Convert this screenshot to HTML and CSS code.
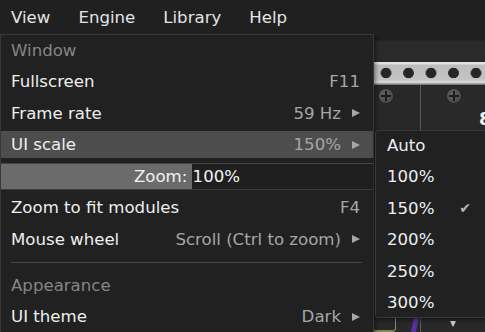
FILE: index.html
```html
<!DOCTYPE html>
<html>
<head>
<meta charset="utf-8">
<link rel="stylesheet" href="styles.css">
</head>
<body>
<div class="app">
  <div class="menubar">
    <span class="mb-item">View</span>
    <span class="mb-item">Engine</span>
    <span class="mb-item">Library</span>
    <span class="mb-item">Help</span>
  </div>
  <div class="workspace">
    <div class="rack">
      <div class="rack-top"></div>
      <div class="rail"></div>
      <div class="panels">
        <div class="panel panel-a">
          <div class="screw"></div>
          <div class="jack-row">
            <div class="port-box"></div>
            <div class="cable"></div>
          </div>
        </div>
        <div class="panel panel-b">
          <div class="screw"></div>
          <div class="label">8</div>
          <div class="arrow-down"></div>
        </div>
      </div>
    </div>

    <div class="menu main-menu">
      <div class="item header">Window</div>
      <div class="item"><span>Fullscreen</span><span class="right">F11</span></div>
      <div class="item"><span>Frame rate</span><span class="right">59 Hz<i class="tri"></i></span></div>
      <div class="item active"><span>UI scale</span><span class="right">150%<i class="tri"></i></span></div>
      <div class="slider" style="--fill: 191px"><span class="slider-text">Zoom: 100%</span></div>
      <div class="item"><span>Zoom to fit modules</span><span class="right">F4</span></div>
      <div class="item"><span>Mouse wheel</span><span class="right">Scroll (Ctrl to zoom)<i class="tri"></i></span></div>
      <div class="separator"><div class="sep-line"></div></div>
      <div class="item header">Appearance</div>
      <div class="item"><span>UI theme</span><span class="right">Dark<i class="tri"></i></span></div>
    </div>

    <div class="menu sub-menu">
      <div class="item">Auto</div>
      <div class="item">100%</div>
      <div class="item"><span>150%</span><span class="check">✔</span></div>
      <div class="item">200%</div>
      <div class="item">250%</div>
      <div class="item">300%</div>
    </div>
  </div>
</div>
</body>
</html>
```

FILE: styles.css
```css
* { box-sizing: border-box; }
html, body {
  margin: 0;
  padding: 0;
  width: 485px;
  height: 332px;
  overflow: hidden;
  background: #1c1c1c;
  font-family: "DejaVu Sans", "Liberation Sans", sans-serif;
  font-size: 16.6px;
}
.app {
  display: flex;
  flex-direction: column;
  width: 485px;
  height: 332px;
}
.menubar {
  height: 34px;
  flex: none;
  background: #202020;
  display: flex;
  align-items: center;
  gap: 28px;
  padding: 1px 0 0 11px;
  color: #e4e4e4;
}
.workspace {
  position: relative;
  flex: 1;
  overflow: hidden;
}
.rack {
  display: flex;
  flex-direction: column;
  height: 100%;
}
.rack-top {
  height: 28px;
  flex: none;
  background: linear-gradient(#1f1f1f 0, #1f1f1f 6px, #2a2a2a 7px, #2a2a2a 100%);
}
.rail {
  height: 23px;
  flex: none;
  background:
    radial-gradient(circle at 11.25px 11px, #262626 0, #262626 5px, transparent 5.6px) 14.75px 0 / 22.5px 23px repeat-x,
    linear-gradient(#e2e2e2 0, #e2e2e2 2px, #bdbdbd 3px, #c4c4c4 18px, #d4d4d4 19px, #d4d4d4 21px, #7a7a7a 22px);
}
.panels {
  flex: 1;
  display: flex;
}
.panel {
  display: flex;
  flex-direction: column;
  background: #282828;
}
.panel-a {
  width: 421px;
  flex: none;
  align-items: flex-end;
  border-right: 1px solid #5a5a5a;
  padding: 4px 27px 0 0;
}
.panel-b {
  flex: 1;
  min-width: 0;
  overflow: hidden;
  padding: 4px 0 0 26px;
  background: #292929;
}
.screw {
  width: 14px;
  height: 14px;
  border-radius: 50%;
  background: radial-gradient(circle at 40% 40%, #626262, #4a4a4a 70%);
  position: relative;
  flex: none;
}
.screw::before, .screw::after {
  content: "";
  position: absolute;
  background: #1b1b1b;
}
.screw::before { left: 2px; right: 2px; top: 6px; height: 2px; }
.screw::after { top: 2px; bottom: 2px; left: 6px; width: 2px; }
.label {
  margin: 6px 0 0 32px;
  color: #f0f0f0;
  font-weight: bold;
  font-size: 18px;
  line-height: 20px;
  white-space: nowrap;
}
.arrow-down {
  margin: auto 0 5px 3px;
  width: 0;
  height: 0;
  border-left: 3.5px solid transparent;
  border-right: 3.5px solid transparent;
  border-top: 6px solid #d0d0d0;
}
.jack-row {
  margin-top: auto;
  margin-right: -26px;
  display: flex;
  align-items: flex-end;
  gap: 17px;
  height: 20px;
}
.port-box {
  width: 25px;
  height: 19px;
  border: 1px solid #8a8a8a;
  border-top: none;
  border-radius: 0 0 4px 4px;
  box-shadow: inset 1px -1px 0 #7a8a1a;
}
.cable {
  width: 5px;
  height: 20px;
  background: #5b2fa0;
  transform: skewX(-12deg);
  margin-right: 1px;
}

.menu {
  position: absolute;
  display: flex;
  flex-direction: column;
  gap: 4.5px;
  background: #212121;
  border: 1px solid #383838;
  color: #eeeeee;
}
.main-menu {
  left: 0;
  top: 0;
  width: 374px;
  height: 320px;
  padding-top: 1.5px;
  box-shadow: 2px 2px 4px rgba(0,0,0,0.4);
}
.sub-menu {
  left: 375px;
  top: 96px;
  width: 116px;
  border-radius: 3px;
  padding: 0.5px 0 1px;
  box-shadow: 0 2px 4px rgba(0,0,0,0.5);
}
.item {
  height: 27px;
  flex: none;
  display: flex;
  align-items: center;
  justify-content: space-between;
  padding: 0 13px 0 10px;
  white-space: nowrap;
}
.sub-menu .item {
  padding: 0 19px 0 11px;
}
.item.header {
  color: #858585;
}
.item.active {
  background: #4d4d4d;
}
.right {
  display: flex;
  align-items: center;
  color: #a6a6a6;
}
.tri {
  display: inline-block;
  width: 0;
  height: 0;
  margin-left: 11px;
  border-top: 4.5px solid transparent;
  border-bottom: 4.5px solid transparent;
  border-left: 8px solid #a6a6a6;
}
.check {
  color: #b4b4b4;
  font-size: 14px;
}
.slider {
  height: 27px;
  flex: none;
  display: flex;
  align-items: center;
  justify-content: center;
  border-top: 1px solid #444;
  border-bottom: 1px solid #3a3a3a;
  background: linear-gradient(to right, #6b6b6b var(--fill), #1f1f1f var(--fill));
  color: #f2f2f2;
}
.separator {
  height: 10px;
  flex: none;
  display: flex;
  align-items: center;
  padding: 0 10px 0 10px;
}
.sep-line {
  width: 351px;
  height: 1px;
  background: #444;
}
```
